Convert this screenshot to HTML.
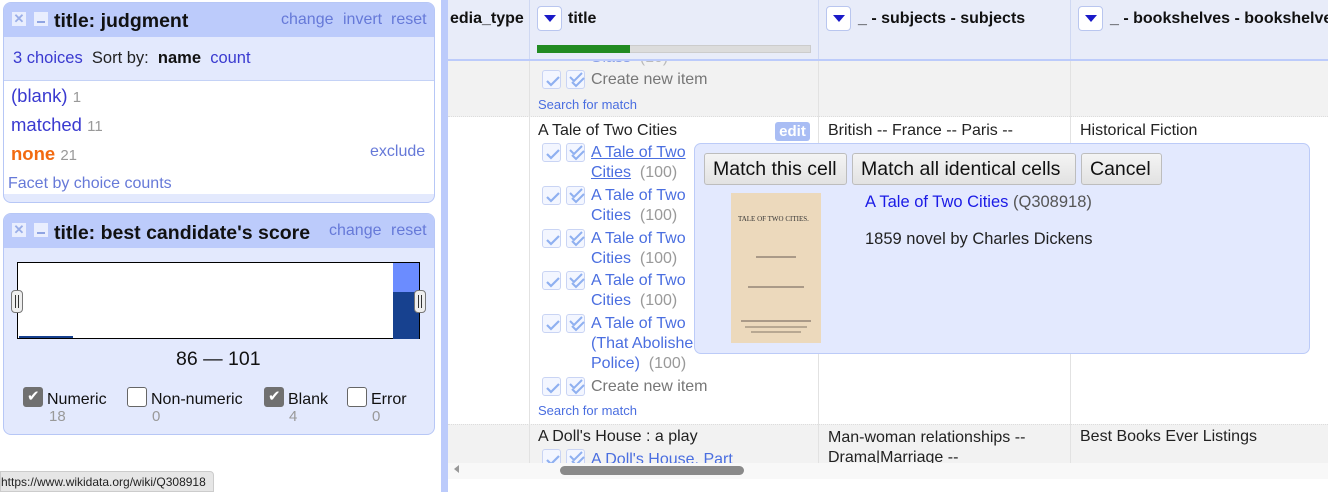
<!DOCTYPE html>
<html><head><style>
*{box-sizing:border-box;margin:0;padding:0}
body{width:1328px;height:492px;overflow:hidden;background:#fff;font-family:"Liberation Sans",Arial,sans-serif;font-size:16px;color:#222;position:relative}
.abs{position:absolute;white-space:nowrap}
a{color:#3a3ad0;text-decoration:none}
.lk{color:#6679d8}
.facet{position:absolute;left:3px;width:432px;border:1px solid #b7c7f6;border-radius:8px;overflow:hidden;background:#e3e9fd}
.fh{position:absolute;left:0;right:0;top:0;height:34px;background:#bccbfb}
.xb{position:absolute;width:14px;height:14px;background:#e9eefe;color:#9aaee8;font-size:13px;font-weight:bold;line-height:14px;text-align:center}
.mb{position:absolute;width:14px;height:14px;background:#e9eefe}
.mb:after{content:"";position:absolute;left:3px;right:3px;top:9px;height:2px;background:#8fa4e2}
.ft{position:absolute;font-weight:bold;font-size:19.5px;color:#111;white-space:nowrap}
.cb{position:absolute;width:20px;height:20px;border:1px solid #666;border-radius:3px;background:#fff}
.cb.on{background:#707070;border-color:#707070}
.cb.on:after{content:"✔";position:absolute;left:3px;top:-1px;color:#fff;font-size:15px}
.chk{position:absolute;width:19px;height:19px;border:1px solid #c9d4f4;border-radius:3px;background:#f3f6ff}
.chk svg{position:absolute;left:1px;top:1px}
.hdr{position:absolute;top:0;height:60px;background:#e8ecf9;border-right:1px solid #cfd8f2}
.dd{position:absolute;top:6px;width:25px;height:25px;border:1px solid #b9c6ef;border-radius:4px;background:#fff}
.dd:after{content:"";position:absolute;left:6px;top:8px;border-left:6px solid transparent;border-right:6px solid transparent;border-top:7px solid #1a1ac8}
.ht{position:absolute;top:10px;font-weight:bold;font-size:16px;color:#111;white-space:nowrap}
.cl{position:absolute;width:1px;background:#e2e2e2}
.btn{position:absolute;top:9px;height:32px;border:1px solid #bdbdbd;border-radius:3px;background:linear-gradient(#f4f4f4,#e2e2e2);font-size:19.5px;color:#111;line-height:30px;padding:0 8px;white-space:nowrap}
.gr{color:#999}
.bl{color:#4a6ee0}
</style></head><body>

<!-- facet 1 -->
<div class="facet" style="top:2px;height:201px">
  <div class="fh"></div>
  <div class="xb" style="left:8px;top:9px">✕</div>
  <div class="mb" style="left:30px;top:9px"></div>
  <div class="ft" style="left:50px;top:7px">title: judgment</div>
  <div class="abs lk" style="left:277px;top:8px">change</div>
  <div class="abs lk" style="left:339px;top:8px">invert</div>
  <div class="abs lk" style="left:387px;top:8px">reset</div>
  <div class="abs" style="left:9px;top:46px;font-size:16.5px"><a>3 choices</a>&nbsp; Sort by: &nbsp;<b style="color:#111">name</b>&nbsp; <a>count</a></div>
  <div style="position:absolute;left:0;right:0;top:77px;height:114px;background:#fff;border-top:1px solid #c4d2f6"></div>
  <div class="abs" style="left:7px;top:82px;font-size:18.5px"><a>(blank)</a> <span class="gr" style="font-size:15px">1</span></div>
  <div class="abs" style="left:7px;top:111px;font-size:18.5px"><a>matched</a> <span class="gr" style="font-size:15px">11</span></div>
  <div class="abs" style="left:7px;top:140px;font-size:18.5px"><b style="color:#f26a10">none</b> <span class="gr" style="font-size:15px">21</span></div>
  <div class="abs lk" style="left:366px;top:140px">exclude</div>
  <div class="abs lk" style="left:4px;top:172px">Facet by choice counts</div>
</div>

<!-- facet 2 -->
<div class="facet" style="top:213px;height:222px">
  <div class="fh"></div>
  <div class="xb" style="left:8px;top:9px">✕</div>
  <div class="mb" style="left:30px;top:9px"></div>
  <div class="ft" style="left:50px;top:8px">title: best candidate's score</div>
  <div class="abs lk" style="left:325px;top:8px">change</div>
  <div class="abs lk" style="left:387px;top:8px">reset</div>
  <div style="position:absolute;left:13px;top:48px;width:403px;height:77px;background:#fff;border:1px solid #000"></div>
  <div style="position:absolute;left:389px;top:49px;width:26px;height:29px;background:#6b8cff"></div>
  <div style="position:absolute;left:389px;top:78px;width:26px;height:47px;background:#17418f"></div>
  <div style="position:absolute;left:15px;top:122px;width:54px;height:2px;background:#17418f"></div>
  <div style="position:absolute;left:7px;top:76px;width:12px;height:23px;border:1px solid #777;border-radius:4px;background:#eee"><div style="position:absolute;left:3px;top:4px;width:4px;height:13px;border-left:1px solid #333;border-right:1px solid #333"></div></div>
  <div style="position:absolute;left:410px;top:76px;width:12px;height:23px;border:1px solid #777;border-radius:4px;background:#eee"><div style="position:absolute;left:3px;top:4px;width:4px;height:13px;border-left:1px solid #333;border-right:1px solid #333"></div></div>
  <div class="abs" style="left:172px;top:134px;font-size:19.5px;color:#111">86 — 101</div>
  <div class="cb on" style="left:19px;top:173px"></div>
  <div class="abs" style="left:43px;top:177px;color:#111">Numeric</div>
  <div class="abs gr" style="left:45px;top:194px;font-size:15px">18</div>
  <div class="cb" style="left:123px;top:173px"></div>
  <div class="abs" style="left:147px;top:177px;color:#111">Non-numeric</div>
  <div class="abs gr" style="left:148px;top:194px;font-size:15px">0</div>
  <div class="cb on" style="left:260px;top:173px"></div>
  <div class="abs" style="left:284px;top:177px;color:#111">Blank</div>
  <div class="abs gr" style="left:285px;top:194px;font-size:15px">4</div>
  <div class="cb" style="left:343px;top:173px"></div>
  <div class="abs" style="left:367px;top:177px;color:#111">Error</div>
  <div class="abs gr" style="left:368px;top:194px;font-size:15px">0</div>
</div>

<div class="abs" style="left:0;top:471px;width:214px;height:21px;background:#e6e6e6;border:1px solid #ccc;border-radius:0 4px 0 0;font-size:12px;line-height:20px;color:#222">https://www.wikidata.org/wiki/Q308918</div>

<!-- divider -->
<div style="position:absolute;left:441px;top:0;width:7px;height:492px;background:#bccbfb"></div>

<!-- table -->
<div style="position:absolute;left:448px;top:0;width:880px;height:463px;overflow:hidden">
  <div style="position:absolute;left:0;right:0;top:61px;height:56px;background:#f2f2f2;border-bottom:1px dotted #ddd"></div>
  <div style="position:absolute;left:0;right:0;top:424px;height:40px;background:#f2f2f2;border-top:1px dotted #ddd"></div>
  <div class="abs bl" style="left:142px;top:49px;color:#8aa0e6">Glass &nbsp;<span style="color:#bbb">(10)</span></div>

  <div class="hdr" style="left:0;width:82px"></div>
  <div class="ht" style="left:2px">edia_type</div>
  <div class="hdr" style="left:82px;width:289px"></div>
  <div class="dd" style="left:89px"></div>
  <div class="ht" style="left:120px">title</div>
  <div style="position:absolute;left:89px;top:45px;width:274px;height:8px;background:#dcdcdc;border:1px solid #ccc"></div>
  <div style="position:absolute;left:89px;top:45px;width:93px;height:8px;background:#228b22"></div>
  <div class="hdr" style="left:371px;width:252px"></div>
  <div class="dd" style="left:378px"></div>
  <div class="ht" style="left:410px">_ - subjects - subjects</div>
  <div class="hdr" style="left:623px;width:300px"></div>
  <div class="dd" style="left:630px"></div>
  <div class="ht" style="left:662px">_ - bookshelves - bookshelves</div>
  <div style="position:absolute;left:0;right:0;top:59px;height:2px;background:#bccbfb"></div>

  <div class="cl" style="left:81px;top:61px;height:410px"></div>
  <div class="cl" style="left:370px;top:61px;height:410px"></div>
  <div class="cl" style="left:622px;top:61px;height:410px"></div>

  <div class="abs" style="left:90px;top:122px">A Tale of Two Cities</div>
  <div class="abs" style="left:327px;top:122px;width:35px;height:19px;background:#a9bdf4;border-radius:3px;color:#fff;font-weight:bold;font-size:15px;text-align:center;line-height:19px">edit</div>
  <div class="abs" style="left:380px;top:122px">British -- France -- Paris --</div>
  <div class="abs" style="left:632px;top:122px">Historical Fiction</div>
  <div class="abs bl" style="left:90px;top:97px;font-size:13px">Search for match</div>
  <div class="abs bl" style="left:90px;top:403px;font-size:13px">Search for match</div>
  <div class="abs" style="left:90px;top:428px">A Doll's House : a play</div>
  <div class="abs" style="left:380px;top:428px;line-height:20px">Man-woman relationships --<br>Drama|Marriage --</div>
  <div class="abs" style="left:632px;top:428px">Best Books Ever Listings</div>
</div>

<script>
(function(){
var svg='<svg width="17" height="17" viewBox="0 0 17 17"><path d="M3 9l4 4 8-8" stroke="#8fb0f0" stroke-width="2.2" fill="none"/></svg>';
var svg2='<svg width="17" height="17" viewBox="0 0 17 17"><path d="M2 5l4 4 8-8" stroke="#8fb0f0" stroke-width="2" fill="none"/><path d="M4 10l4 4 8-8" stroke="#8fb0f0" stroke-width="2" fill="none"/></svg>';
var h='';
function pair(y){h+='<div class="chk" style="left:542px;top:'+y+'px">'+svg+'</div><div class="chk" style="left:566px;top:'+y+'px">'+svg2+'</div>';}
function t(x,y,s,c){h+='<div class="abs" style="left:'+x+'px;top:'+y+'px;color:'+c+'">'+s+'</div>';}
pair(70);t(591,71,'Create new item','#777');
var ys=[143,186,229,271,314];
for(var i=0;i<5;i++){pair(ys[i]);}
t(591,144,'<u>A Tale of Two</u>','#4a6ee0');t(591,164,'<u>Cities</u> &nbsp;<span style="color:#999">(100)</span>','#4a6ee0');
t(591,187,'A Tale of Two','#4a6ee0');t(591,207,'Cities &nbsp;<span style="color:#999">(100)</span>','#4a6ee0');
t(591,230,'A Tale of Two','#4a6ee0');t(591,250,'Cities &nbsp;<span style="color:#999">(100)</span>','#4a6ee0');
t(591,272,'A Tale of Two','#4a6ee0');t(591,292,'Cities &nbsp;<span style="color:#999">(100)</span>','#4a6ee0');
t(591,315,'A Tale of Two','#4a6ee0');t(591,335,'(That Abolished','#4a6ee0');t(591,355,'Police) &nbsp;<span style="color:#999">(100)</span>','#4a6ee0');
pair(377);t(591,378,'Create new item','#777');
pair(449);t(591,451,'A Doll\'s House, Part','#4a6ee0');
document.body.insertAdjacentHTML('beforeend',h);
})();
</script>

<!-- popup -->
<div style="position:absolute;left:694px;top:143px;width:616px;height:211px;background:#e3e9fe;border:1px solid #bccbf8;border-radius:7px">
  <div class="btn" style="left:9px;width:143px">Match this cell</div>
  <div class="btn" style="left:157px;width:224px">Match all identical cells</div>
  <div class="btn" style="left:386px;width:81px">Cancel</div>
  <div style="position:absolute;left:36px;top:49px;width:90px;height:150px;background:#ecd9bc">
    <div class="abs" style="left:7px;top:22px;font-family:'Liberation Serif',serif;font-size:7px;color:#333">TALE OF TWO CITIES.</div>
    <div style="position:absolute;left:25px;top:63px;width:40px;height:2px;background:#aa9a88"></div>
    <div style="position:absolute;left:17px;top:93px;width:56px;height:2px;background:#aa9a88"></div>
    <div style="position:absolute;left:10px;top:127px;width:70px;height:2px;background:#aa9a88"></div>
    <div style="position:absolute;left:14px;top:133px;width:62px;height:2px;background:#b8a892"></div>
    <div style="position:absolute;left:20px;top:138px;width:50px;height:2px;background:#b8a892"></div>
  </div>
  <div class="abs" style="left:170px;top:49px;font-size:16.5px"><span style="color:#1a1ae6">A Tale of Two Cities</span> <span style="color:#555">(Q308918)</span></div>
  <div class="abs" style="left:170px;top:86px;color:#222;font-size:16.5px">1859 novel by Charles Dickens</div>
</div>

<!-- scrollbar -->
<div style="position:absolute;left:448px;top:463px;width:880px;height:16px;background:#f8f8f8"></div>
<div class="abs" style="left:454px;top:465px;width:0;height:0;border-top:4px solid transparent;border-bottom:4px solid transparent;border-right:5px solid #999"></div>
<div style="position:absolute;left:560px;top:466px;width:184px;height:9px;background:#8a8a8a;border-radius:5px"></div>
</body></html>
